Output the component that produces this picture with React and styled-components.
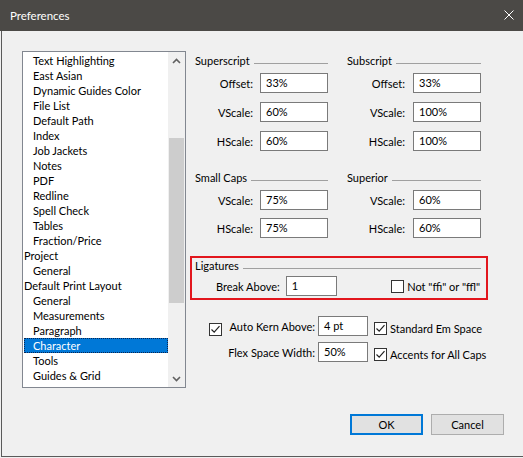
import React from "react";
import styled, { createGlobalStyle } from "styled-components";

const Global = createGlobalStyle`
  html, body { margin: 0; padding: 0; background: #f0f0f0; }
  body { width: 523px; height: 458px; overflow: hidden; font-family: Lato, "Segoe UI", sans-serif; font-size: 11px; line-height: 15px; color: #000; }
  * { box-sizing: border-box; }
`;

const Frame = styled.div`
  width: 523px;
  height: 458px;
  display: flex;
  flex-direction: column;
`;

const TitleBar = styled.div`
  height: 31px;
  background: #4b4946;
  color: #fff;
  display: flex;
  align-items: center;
  justify-content: space-between;
  padding: 0 9px 1px 10px;
  font-size: 11.5px;
`;

const Body = styled.div`
  margin-left: 1px;
  width: 522px;
  height: 426px;
  border-left: 1px solid #5a5a5a;
  border-bottom: 1px solid #5a5a5a;
  background: #f0f0f0;
  padding: 20px 19px 0 20px;
  display: flex;
  flex-direction: column;
`;

const MainRow = styled.div`
  display: flex;
  height: 337px;
`;

const ListBox = styled.div`
  width: 164px;
  height: 337px;
  border: 1px solid #828790;
  background: #fff;
  display: flex;
`;

const Items = styled.div`
  flex: 1;
  overflow: hidden;
  padding-top: 1px;
`;

const Item = styled.div`
  height: 15px;
  line-height: 15px;
  margin-left: 1px;
  padding-left: ${(p) => (p.$child ? "9px" : "0px")};
  white-space: nowrap;
  background: ${(p) => (p.$selected ? "#0078d7" : "transparent")};
  color: ${(p) => (p.$selected ? "#fff" : "#000")};
  outline: ${(p) => (p.$selected ? "1px dotted #0b2550" : "none")};
  outline-offset: -1px;
`;

const ScrollBar = styled.div`
  width: 17px;
  background: #f0f0f0;
  display: flex;
  flex-direction: column;
`;

const ScrollBtn = styled.div`
  height: 17px;
  display: flex;
  align-items: center;
  justify-content: center;
`;

const Track = styled.div`
  flex: 1;
  padding: 69px 1px 0 1px;
`;

const Thumb = styled.div`
  height: 165px;
  background: #cdcdcd;
`;

const Panel = styled.div`
  margin-left: 4px;
  padding-top: 2px;
  display: flex;
  flex-direction: column;
`;

const Groups = styled.div`
  display: grid;
  grid-template-columns: 133px 134px;
  column-gap: 19px;
  row-gap: 19px;
  padding-left: 5px;
`;

const Group = styled.div`
  display: flex;
  flex-direction: column;
  gap: 5px;
`;

const Header = styled.div`
  display: flex;
  align-items: center;
  height: 15px;
  line-height: 15px;
`;

const HeaderLine = styled.div`
  flex: 1;
  margin-left: 4px;
  margin-top: 5px;
  border-top: 1px solid #a0a0a0;
`;

const Fields = styled.div`
  display: grid;
  grid-template-columns: 58px 68px;
  column-gap: ${(p) => p.$gap}px;
  row-gap: ${(p) => p.$rowGap}px;
  align-items: center;
`;

const Label = styled.div`
  text-align: right;
  white-space: nowrap;
  line-height: 15px;
`;

const Input = styled.div`
  width: ${(p) => p.$w || 68}px;
  height: 20px;
  border: 1px solid #7a7a7a;
  background: #fff;
  padding-left: 5px;
  line-height: 18px;
  white-space: nowrap;
`;

const Ligatures = styled.div`
  margin-top: 18px;
  width: 298px;
  height: 44px;
  border: 2px solid #e2161d;
  padding: 0 5px 0 3px;
  display: flex;
  flex-direction: column;
  gap: 3px;
`;

const LigRow = styled.div`
  display: flex;
  align-items: center;
  padding-left: 21px;
  gap: 6px;
`;

const LigCheck = styled.label`
  display: flex;
  align-items: center;
  gap: 3px;
  margin-left: auto;
  margin-right: 1px;
  white-space: nowrap;
  line-height: 15px;
`;

const CheckGroup = styled.label`
  display: flex;
  align-items: center;
  gap: 3px;
  margin-left: 3px;
  white-space: nowrap;
  line-height: 15px;
  align-self: end;
`;

const Box = styled.span`
  width: 13px;
  height: 13px;
  border: 1px solid #333;
  background: #fff;
  display: inline-flex;
  align-items: center;
  justify-content: center;
  flex-shrink: 0;
  align-self: ${(p) => p.$align || "auto"};
`;

const Options = styled.div`
  margin-top: 16px;
  padding-left: 19px;
  display: grid;
  grid-template-columns: 13px 90px 50px auto;
  column-gap: 3px;
  row-gap: 6px;
  align-items: center;
`;

const Footer = styled.div`
  margin-top: 26px;
  display: flex;
  justify-content: flex-end;
  gap: 8px;
`;

const Button = styled.div`
  width: 73px;
  height: 21px;
  background: #e1e1e1;
  border: ${(p) => (p.$default ? "2px solid #0078d7" : "1px solid #adadad")};
  display: flex;
  align-items: center;
  justify-content: center;
  line-height: 15px;
`;

const Check = () => (
  <svg width="11" height="11" viewBox="0 0 11 11">
    <path d="M1.5 5.5 L4.2 8.2 L9.5 2.2" fill="none" stroke="#222" strokeWidth="1.2" />
  </svg>
);

const CheckBox = ({ checked, align }) => <Box $align={align}>{checked && <Check />}</Box>;

const Chevron = ({ up }) => (
  <svg width="9" height="6" viewBox="0 0 9 6">
    <path d={up ? "M1 5 L4.5 1.5 L8 5" : "M1 1 L4.5 4.5 L8 1"} fill="none" stroke="#606060" strokeWidth="1.6" />
  </svg>
);

const items = [
  ["Text Highlighting", 1],
  ["East Asian", 1],
  ["Dynamic Guides Color", 1],
  ["File List", 1],
  ["Default Path", 1],
  ["Index", 1],
  ["Job Jackets", 1],
  ["Notes", 1],
  ["PDF", 1],
  ["Redline", 1],
  ["Spell Check", 1],
  ["Tables", 1],
  ["Fraction/Price", 1],
  ["Project", 0],
  ["General", 1],
  ["Default Print Layout", 0],
  ["General", 1],
  ["Measurements", 1],
  ["Paragraph", 1],
  ["Character", 1],
  ["Tools", 1],
  ["Guides & Grid", 1],
  ["Layers", 1],
];

const FieldGroup = ({ title, rows, gap, rowGap }) => (
  <Group>
    <Header>
      {title}
      <HeaderLine />
    </Header>
    <Fields $gap={gap} $rowGap={rowGap}>
      {rows.map(([l, v]) => (
        <React.Fragment key={l}>
          <Label>{l}</Label>
          <Input>{v}</Input>
        </React.Fragment>
      ))}
    </Fields>
  </Group>
);

export default function App() {
  return (
    <Frame>
      <Global />
      <TitleBar>
        <span>Preferences</span>
        <svg width="10" height="10" viewBox="0 0 10 10">
          <path d="M0.5 0.5 L9.5 9.5 M9.5 0.5 L0.5 9.5" stroke="#fff" strokeWidth="1" />
        </svg>
      </TitleBar>
      <Body>
        <MainRow>
          <ListBox>
            <Items>
              {items.map(([t, c], i) => (
                <Item key={i} $child={c} $selected={t === "Character"}>
                  {t}
                </Item>
              ))}
            </Items>
            <ScrollBar>
              <ScrollBtn>
                <Chevron up />
              </ScrollBtn>
              <Track>
                <Thumb />
              </Track>
              <ScrollBtn>
                <Chevron />
              </ScrollBtn>
            </ScrollBar>
          </ListBox>
          <Panel>
            <Groups>
              <FieldGroup
                title="Superscript"
                gap={7}
                rowGap={9}
                rows={[["Offset:", "33%"], ["VScale:", "60%"], ["HScale:", "60%"]]}
              />
              <FieldGroup
                title="Subscript"
                gap={8}
                rowGap={9}
                rows={[["Offset:", "33%"], ["VScale:", "100%"], ["HScale:", "100%"]]}
              />
              <FieldGroup title="Small Caps" gap={7} rowGap={8} rows={[["VScale:", "75%"], ["HScale:", "75%"]]} />
              <FieldGroup title="Superior" gap={8} rowGap={8} rows={[["VScale:", "60%"], ["HScale:", "60%"]]} />
            </Groups>
            <Ligatures>
              <Header>
                Ligatures
                <HeaderLine />
              </Header>
              <LigRow>
                <Label>Break Above:</Label>
                <Input $w={51}>1</Input>
                <LigCheck>
                  <CheckBox />
                  Not "ffi" or "ffl"
                </LigCheck>
              </LigRow>
            </Ligatures>
            <Options>
              <CheckBox checked align="end" />
              <Label>Auto Kern Above:</Label>
              <Input $w={50}>4 pt</Input>
              <CheckGroup>
                <CheckBox checked />
                Standard Em Space
              </CheckGroup>
              <span />
              <Label>Flex Space Width:</Label>
              <Input $w={50}>50%</Input>
              <CheckGroup>
                <CheckBox checked />
                Accents for All Caps
              </CheckGroup>
            </Options>
          </Panel>
        </MainRow>
        <Footer>
          <Button $default>OK</Button>
          <Button>Cancel</Button>
        </Footer>
      </Body>
    </Frame>
  );
}
